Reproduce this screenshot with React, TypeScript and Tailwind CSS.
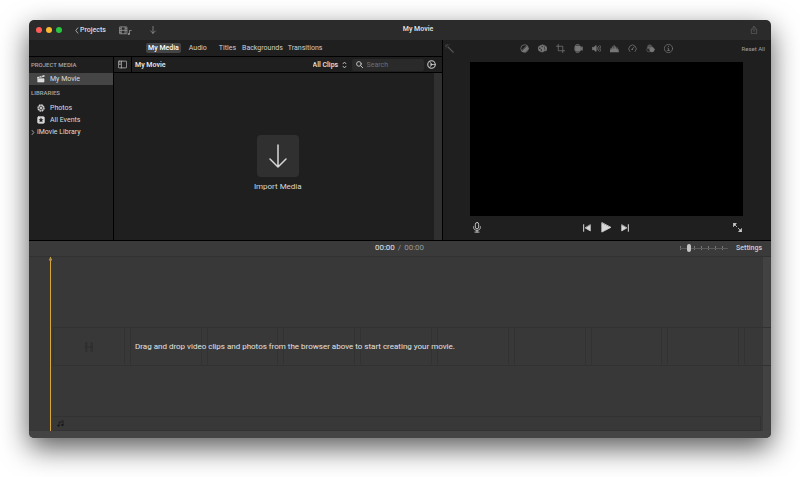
import { useState } from "react";
import type { ReactNode } from "react";

const tabs = ["My Media", "Audio", "Titles", "Backgrounds", "Transitions"];

const tabSpacing = ["", "ml-[6px]", "ml-2", "ml-[2px]", "ml-px"];

function Icon({ children, className = "" }: { children: ReactNode; className?: string }) {
    return (
        <svg
            viewBox="0 0 24 24"
            fill="none"
            stroke="currentColor"
            strokeWidth="2"
            strokeLinecap="round"
            strokeLinejoin="round"
            aria-hidden="true"
            className={`shrink-0 ${className}`}
        >
            {children}
        </svg>
    );
}

const adjustments = [
    {
        name: "Color balance",
        icon: (
            <>
                <circle cx="12" cy="12" r="10" />
                <path d="M19 5A10 10 0 0 1 5 19Z" fill="currentColor" />
            </>
        ),
    },
    {
        name: "Color correction",
        icon: (
            <>
                <path
                    d="M12 3C5 3 0 7 0 12s5 9 12 9c4 0 3-3 6-3h2c3 0 4-3 4-6 0-5-5-9-12-9Z"
                    fill="currentColor"
                />
                <g fill="#1f1f1f" stroke="none">
                    <circle cx="5" cy="11" r="2" />
                    <circle cx="11" cy="7" r="1.5" />
                    <circle cx="17" cy="8" r="1.5" />
                    <circle cx="9" cy="16" r="2" />
                    <circle cx="18" cy="13" r="1.5" />
                </g>
            </>
        ),
    },
    {
        name: "Cropping",
        icon: (
            <>
                <path d="M6 0v18h18" />
                <path d="M0 6h18v18" />
            </>
        ),
    },
    {
        name: "Stabilization",
        icon: (
            <>
                <rect x="3" y="5" width="14" height="14" rx="1" fill="currentColor" />
                <path d="M17 11l5-4v10l-5-4Z" fill="currentColor" />
                <path d="M6 1h7M6 23h7M0 9v6" />
            </>
        ),
    },
    {
        name: "Volume",
        icon: (
            <>
                <path d="M1 9h4l6-5v16l-6-5H1Z" fill="currentColor" />
                <path d="M14 9c1 2 1 4 0 6M17 6c3 4 3 8 0 12M21 4c4 5 4 11 0 16" />
            </>
        ),
    },
    {
        name: "Noise reduction",
        icon: (
            <path
                d="M0 21v-6h2v-4h2v3h2V7h2v5h2V4h2v7h2V7h2v6h2v-3h2v5h3v6Z"
                fill="currentColor"
                strokeWidth="1"
            />
        ),
    },
    {
        name: "Speed",
        icon: (
            <>
                <path d="M5 20a10 10 0 1 1 14 0" />
                <path d="M11 14l5-6" />
                <circle cx="11" cy="14" r="1" fill="currentColor" />
            </>
        ),
    },
    {
        name: "Clip filter",
        icon: (
            <>
                <circle cx="10" cy="8" r="6" fill="currentColor" opacity=".6" />
                <circle cx="8" cy="15" r="6" opacity=".7" />
                <circle cx="16" cy="15" r="6" fill="currentColor" />
            </>
        ),
    },
    {
        name: "Clip information",
        icon: (
            <>
                <circle cx="12" cy="12" r="11" />
                <path d="M10 11h2v6M9 17h6M12 6v1" />
            </>
        ),
    },
];

function TitleBar() {
    return (
        <header className="grid h-5 grid-cols-3 items-center bg-[#2b2b2b] px-[7px]">
            <div className="flex items-center">
                <div className="flex gap-1">
                    <button type="button" aria-label="Close" className="size-[6px] rounded-full bg-[#fc5b57]" />
                    <button type="button" aria-label="Minimize" className="size-[6px] rounded-full bg-[#fdb92f]" />
                    <button type="button" aria-label="Zoom" className="size-[6px] rounded-full bg-[#27c840]" />
                </div>
                <button type="button" className="ml-[13px] flex items-center gap-px font-medium text-[#dedede]">
                    <Icon className="h-[7px] w-1">
                        <path d="M17 -4L5 12l12 16" strokeWidth="4" />
                    </Icon>
                    Projects
                </button>
                <button type="button" aria-label="Show library" className="ml-[13px] text-[#a5a5a5]">
                    <svg viewBox="0 0 36 24" fill="none" stroke="currentColor" strokeWidth="2" className="h-[9px] w-[13px]">
                        <rect x="1" y="2" width="21" height="19" rx="1" />
                        <path d="M6 2v19M17 2v19M6 11.500h11M1 7h5M1 12h5M1 17h5M17 7h5M17 12h5" />
                        <path d="M29 22V12h6" />
                        <circle cx="27" cy="22" r="2" fill="currentColor" />
                    </svg>
                </button>
                <button type="button" aria-label="Import media" className="ml-[17px] text-[#a5a5a5]">
                    <Icon className="size-2">
                        <path d="M12 1v21M5 15l7 7 7-7" />
                    </Icon>
                </button>
            </div>
            <h1 className="pb-[2px] pl-[36px] text-center font-semibold text-[#dedede]">My Movie</h1>
            <button type="button" aria-label="Share" className="mr-[6px] justify-self-end text-[#666]">
                <Icon className="size-2">
                    <path d="M8 9H4v14h16V9h-4M12 16V1M8 5l4-4 4 4" />
                </Icon>
            </button>
        </header>
    );
}

function Sidebar() {
    return (
        <nav className="w-[85px] shrink-0 border-r border-black bg-[#1f1f1f] text-[#dcdcdc]">
            <h2 className="flex h-4 items-center pl-[2px] text-[6px] font-medium text-[#a8a8a8]">PROJECT MEDIA</h2>
            <a href="#movie" className="flex h-3 items-center gap-[5px] bg-[#454545] pl-2">
                <Icon className="size-2">
                    <path d="M2 9l19-6M3 11h18v10H3Z" fill="currentColor" />
                    <path d="M2 8l19-5" strokeWidth="4" />
                    <path d="M7 5l2 3M13 3l2 3" stroke="#454545" />
                </Icon>
                My Movie
            </a>
            <h2 className="mt-[2px] flex h-3 items-center pl-[2px] text-[6px] font-medium text-[#a8a8a8]">LIBRARIES</h2>
            <a href="#photos" className="mt-[3px] flex h-3 items-center gap-[5px] pl-2">
                <Icon className="size-2">
                    <circle cx="12" cy="12" r="9" strokeWidth="4" strokeDasharray="5 2" strokeLinecap="butt" />
                    <path d="M12 4v16M4 12h16M6 6l12 12M18 6L6 18" />
                </Icon>
                Photos
            </a>
            <a href="#events" className="flex h-3 items-center gap-[5px] pl-2">
                <Icon className="size-2">
                    <rect x="2" y="2" width="20" height="20" rx="3" fill="currentColor" />
                    <path
                        d="M12 6l2 4 4 .5-3 3 1 4.500-4-2-4 2 1-4.500-3-3 4-.5Z"
                        fill="#1f1f1f"
                        stroke="#1f1f1f"
                        strokeWidth="1"
                    />
                </Icon>
                All Events
            </a>
            <a href="#library" className="flex h-3 items-center gap-[2px] pl-[2px]">
                <Icon className="h-[5px] w-1 text-[#c0c0c0]">
                    <path d="M7 0l10 12L7 24" strokeWidth="5" />
                </Icon>
                iMovie Library
            </a>
        </nav>
    );
}

function MediaBrowser() {
    return (
        <section className="flex flex-1 flex-col bg-[#1f1f1f]">
            <div className="flex h-4 items-center border-b border-black pl-1 pr-[6px] text-[#e4e4e4]">
                <button type="button" aria-label="Toggle sidebar" className="text-[#c0c0c0]">
                    <Icon className="size-[9px]">
                        <rect x="1" y="3" width="22" height="18" rx="2" />
                        <path d="M9 3v18M4 8h2M4 12h2" />
                    </Icon>
                </button>
                <h2 className="ml-1 flex h-full items-center border-l border-black pl-[3px] font-semibold">My Movie</h2>
                <div className="ml-auto flex items-center">
                    <select aria-label="Clip filter" className="appearance-none bg-transparent font-medium outline-none">
                        <option>All Clips</option>
                    </select>
                    <Icon className="ml-[3px] mr-[5px] h-2 w-[5px] text-[#d0d0d0]">
                        <path d="M5 6l7-8 7 8M5 18l7 8 7-8" strokeWidth="4" />
                    </Icon>
                    <label className="flex h-3 items-center gap-1 rounded-xs bg-[#2a2a2a] px-1">
                        <Icon className="size-[7px] text-[#d0d0d0]">
                            <circle cx="10" cy="10" r="8" strokeWidth="3" />
                            <path d="M16 16l7 7" strokeWidth="3" />
                        </Icon>
                        <input
                            type="search"
                            placeholder="Search"
                            aria-label="Search clips"
                            className="w-[53px] bg-transparent text-[#ddd] outline-none placeholder:text-[#707070]"
                        />
                    </label>
                    <button type="button" aria-label="Browser settings" className="ml-[3px] text-[#c8c8c8]">
                        <Icon className="size-[9px]">
                            <circle cx="12" cy="12" r="10" strokeWidth="3" />
                            <path d="M12 12h10M12 12L7 4M12 12L7 20" />
                            <circle cx="12" cy="12" r="2" fill="currentColor" />
                        </Icon>
                    </button>
                </div>
            </div>
            <div className="flex flex-1">
                <div className="flex flex-1 flex-col items-center justify-center pl-2 pt-[14px]">
                    <button type="button" className="flex flex-col items-center gap-[5px] text-[8px] leading-[10px] text-[#d8d8d8]">
                        <span className="flex size-[42px] items-center justify-center rounded-sm bg-[#303030]">
                            <Icon className="size-6">
                                <path d="M12 1v22M4 15l8 8 8-8" strokeWidth="1.5" />
                            </Icon>
                        </span>
                        Import Media
                    </button>
                </div>
                <div className="w-2 bg-[#303030]" />
            </div>
        </section>
    );
}

function Viewer() {
    return (
        <section className="w-[44.4%] shrink-0 border-l border-black bg-[#1f1f1f]">
            <div className="flex h-[22px] items-start pl-[2px] pr-[6px] pt-1 text-[#777]">
                <button type="button" aria-label="Enhance" className="text-[#555]">
                    <Icon className="size-[9px]">
                        <path d="M8 8l14 14" strokeWidth="3" />
                        <path d="M6 0v3M0 6h3M2 2l2 2M11 2l-1 1M2 11l1-1" />
                    </Icon>
                </button>
                <div className="ml-[66px] flex gap-[9px]">
                    {adjustments.map((item) => (
                        <button key={item.name} type="button" aria-label={item.name}>
                            <Icon className="size-[9px]">{item.icon}</Icon>
                        </button>
                    ))}
                </div>
                <button type="button" className="ml-auto text-[6px] leading-[9px] text-[#a0a0a0]">
                    Reset All
                </button>
            </div>
            <div className="pl-[27px] pr-7">
                <div className="aspect-video w-full bg-black" />
                <div className="grid h-6 grid-cols-3 items-center text-[#d8d8d8]">
                    <button type="button" aria-label="Record voiceover" className="ml-[2px] justify-self-start">
                        <Icon className="h-[11px] w-[10px]">
                            <rect x="8" y="0" width="8" height="15" rx="4" />
                            <path d="M4 10v2c0 9 16 9 16 0v-2M12 19v4M7 23h10" />
                        </Icon>
                    </button>
                    <div className="flex items-center justify-center gap-[10px]">
                        <button type="button" aria-label="Previous">
                            <Icon className="size-2">
                                <path d="M2 2v20" strokeWidth="3" />
                                <path d="M22 3v18L7 12Z" fill="currentColor" />
                            </Icon>
                        </button>
                        <button type="button" aria-label="Play">
                            <Icon className="h-[11px] w-[10px]">
                                <path d="M2 1v22l21-11Z" fill="currentColor" />
                            </Icon>
                        </button>
                        <button type="button" aria-label="Next">
                            <Icon className="size-2">
                                <path d="M22 2v20" strokeWidth="3" />
                                <path d="M2 3v18l15-9Z" fill="currentColor" />
                            </Icon>
                        </button>
                    </div>
                    <button type="button" aria-label="Full screen" className="mr-[1px] justify-self-end">
                        <Icon className="size-[9px]">
                            <path d="M1 1h8L1 9ZM23 23h-8l8-8Z" fill="currentColor" />
                            <path d="M4 4l6 6M20 20l-6-6" />
                        </Icon>
                    </button>
                </div>
            </div>
        </section>
    );
}

function Timeline() {
    const [zoom, setZoom] = useState(15);

    return (
        <section className="flex flex-1 flex-col bg-[#383838]">
            <div className="grid h-4 grid-cols-3 items-center border-b border-[#313131] bg-[#3a3a3a] pr-[9px]">
                <div />
                <p className="pl-2 text-center text-[8px] text-[#999]">
                    <span className="text-[#e8e8e8]">00:00</span>
                    <span className="px-[3px]">/</span>
                    00:00
                </p>
                <div className="flex items-center justify-end gap-2">
                    <div className="flex w-12 items-center bg-[repeating-linear-gradient(90deg,#777_0_1px,transparent_1px_7px)] bg-[length:100%_4px] bg-center bg-no-repeat">
                        <input
                            type="range"
                            aria-label="Timeline zoom"
                            value={zoom}
                            onChange={(e) => setZoom(Number(e.target.value))}
                            className="h-2 w-full appearance-none bg-[linear-gradient(#5a5a5a,#5a5a5a)] bg-[length:100%_1px] bg-center bg-no-repeat [&::-webkit-slider-thumb]:h-2 [&::-webkit-slider-thumb]:w-1 [&::-webkit-slider-thumb]:appearance-none [&::-webkit-slider-thumb]:rounded-full [&::-webkit-slider-thumb]:bg-[#c4c4c4]"
                        />
                    </div>
                    <button type="button" className="font-medium text-[#d0d0d0]">
                        Settings
                    </button>
                </div>
            </div>

            <div className="relative flex flex-1 flex-col border-b-[7px] border-[#444] pl-6">
                <div className="absolute inset-y-0 right-0 w-2 bg-[#424242]" />
                <div className="absolute inset-y-0 left-[21px] w-px bg-[#d9a63c]">
                    <div className="absolute -left-px top-px h-[3px] w-[3px] rounded-full bg-[#b5904a]" />
                </div>

                <div className="flex-[71]" />
                <div className="relative flex h-[39px] items-center overflow-hidden border-y border-[#323232]">
                    <div className="flex h-full w-full gap-[5px]">
                        {Array.from({ length: 10 }, (_, i) => (
                            <div
                                key={i}
                                className="flex w-1/10 shrink-0 items-center justify-center border-r border-l border-[#323232]"
                            >
                                {i === 0 && (
                                    <Icon className="size-[10px] text-[#2c2c2c]">
                                        <path d="M4 1v22M20 1v22M4 12h16M7 1v22M17 1v22" />
                                    </Icon>
                                )}
                            </div>
                        ))}
                    </div>
                    <p className="absolute left-[82px] whitespace-nowrap text-[8px] text-[#e2e2e2]">
                        Drag and drop video clips and photos from the browser above to start creating your movie.
                    </p>
                </div>
                <div className="flex-[50]" />
                <div className="mr-[10px] flex h-[15px] items-center border-y border-r border-[#323232] pl-1">
                    <Icon className="size-[7px] text-[#1c1c1c]">
                        <path d="M8 19V6l13-4v14M8 10l13-4" />
                        <circle cx="5" cy="19" r="3" fill="currentColor" />
                        <circle cx="18" cy="17" r="3" fill="currentColor" />
                    </Icon>
                </div>
            </div>
        </section>
    );
}

export default function App() {
    const [activeTab, setActiveTab] = useState("My Media");

    return (
        <div className="flex min-h-screen bg-white px-[29px] pb-[39px] pt-5 font-[Roboto,'Liberation_Sans',sans-serif] text-[7px] leading-[10px]">
            <main className="flex min-w-0 flex-1 flex-col overflow-hidden rounded-[5px] shadow-[0_10px_28px_rgba(0,0,0,0.65)]">
                <TitleBar />
                <div className="flex border-b border-black">
                    <div className="flex min-w-0 flex-1 flex-col">
                        <div className="flex h-[17px] items-center justify-center border-b border-black bg-[#1f1f1f]">
                            {tabs.map((tab, i) => (
                                <button
                                    key={tab}
                                    type="button"
                                    onClick={() => setActiveTab(tab)}
                                    className={`rounded-xs px-[2px] ${tabSpacing[i]} ${
                                        tab === activeTab ? "bg-[#444] font-medium text-white" : "text-[#d0d0d0]"
                                    }`}
                                >
                                    {tab}
                                </button>
                            ))}
                        </div>
                        <div className="flex flex-1">
                            <Sidebar />
                            <MediaBrowser />
                        </div>
                    </div>
                    <Viewer />
                </div>
                <Timeline />
            </main>
        </div>
    );
}
